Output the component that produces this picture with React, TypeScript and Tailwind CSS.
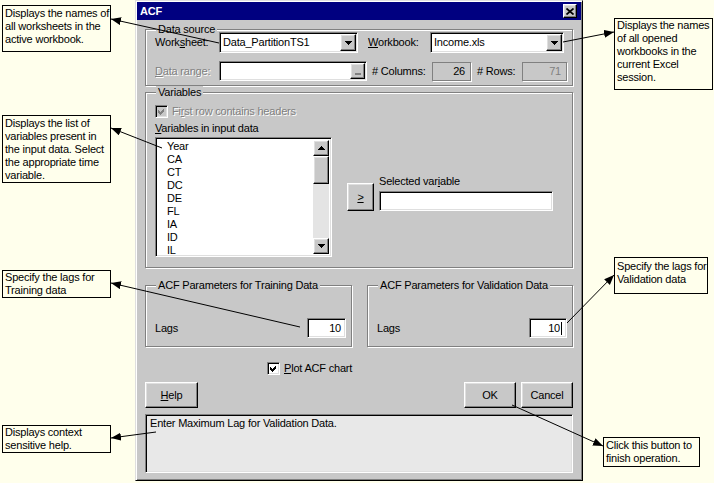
import React from 'react'

const sunken =
  'border border-t-[#808080] border-l-[#808080] border-b-white border-r-white shadow-[inset_1px_1px_0_#000,inset_-1px_-1px_0_#dfdfdf]'
const raised =
  'border border-t-white border-l-white border-b-black border-r-black shadow-[inset_-1px_-1px_0_#808080,inset_1px_1px_0_#dfdfdf]'
const etched = 'border border-[#808080] shadow-[inset_1px_1px_0_#fff,1px_1px_0_#fff]'
const disabled = 'text-[#808080] [text-shadow:1px_1px_0_#fff]'

function Callout({ className, lines }: { className: string; lines: string[] }) {
  return (
    <div className={`whitespace-nowrap border border-black bg-[#ffffec] pl-[2px] ${className}`}>
      {lines.map((l) => (
        <div key={l}>{l}</div>
      ))}
    </div>
  )
}

function DownArrow() {
  return (
    <svg width="7" height="4" shapeRendering="crispEdges">
      <path d="M0 0h7v1H0z M1 1h5v1H1z M2 2h3v1H2z M3 3h1v1H3z" fill="#000" />
    </svg>
  )
}

function UpArrow() {
  return (
    <svg width="7" height="4" shapeRendering="crispEdges">
      <path d="M3 0h1v1H3z M2 1h3v1H2z M1 2h5v1H1z M0 3h7v1H0z" fill="#000" />
    </svg>
  )
}

function Check({ color }: { color: string }) {
  return (
    <svg width="7" height="7" shapeRendering="crispEdges">
      <path d="M0 2 L2 4 L6 0 L6 3 L2 7 L0 5 Z" fill={color} />
    </svg>
  )
}

function Combo({ width, value }: { width: string; value: string }) {
  return (
    <div className={`flex h-[21px] items-center bg-white ${sunken} ${width}`}>
      <span className="flex-1 pl-[3px]">{value}</span>
      <div className={`mr-px flex h-[17px] w-[16px] items-center justify-center bg-[#c8c8c8] ${raised}`}>
        <DownArrow />
      </div>
    </div>
  )
}

function Legend({ text }: { text: string }) {
  return (
    <span className="absolute -top-[7px] left-[10px] bg-[#c8c8c8] px-[2px] whitespace-nowrap">{text}</span>
  )
}

const variables = ['Year', 'CA', 'CT', 'DC', 'DE', 'FL', 'IA', 'ID', 'IL']

function Dialog() {
  return (
    <div className="flex h-[481px] w-[448px] shrink-0 flex-col border border-t-[#dfdfdf] border-l-[#dfdfdf] border-b-black border-r-black bg-[#c8c8c8] p-px shadow-[inset_1px_1px_0_#fff,inset_-1px_-1px_0_#808080]">
      <div className="flex h-[18px] items-center justify-between bg-[#000080] pl-[3px] pr-[4px]">
        <span className="font-bold text-white">ACF</span>
        <div className={`flex h-[14px] w-[14px] items-center justify-center bg-[#c8c8c8] ${raised}`}>
          <svg width="8" height="7">
            <path d="M0.5 0.5 L7.5 6.5 M7.5 0.5 L0.5 6.5" stroke="#000" strokeWidth="1.7" />
          </svg>
        </div>
      </div>

      <div className="flex flex-col px-[8px]">
        {/* Data source */}
        <div className={`relative mt-[9px] h-[57px] pl-[9px] ${etched}`}>
          <Legend text="Data source" />
          <div className="mt-[2px] flex h-[21px] items-center">
            <span className="w-[64px]">
              Work<u>s</u>heet:
            </span>
            <Combo width="w-[139px]" value="Data_PartitionTS1" />
            <span className="ml-[10px] w-[62px]">
              <u>W</u>orkbook:
            </span>
            <Combo width="w-[134px]" value="Income.xls" />
          </div>
          <div className="mt-[8px] flex h-[20px] items-center">
            <span className={`w-[64px] ${disabled}`}>
              <u>D</u>ata range:
            </span>
            <div className={`flex h-[20px] w-[148px] items-center justify-end bg-white ${sunken}`}>
              <div className={`mr-px flex h-[16px] w-[15px] items-end justify-center bg-[#c8c8c8] pb-[3px] ${raised}`}>
                <div className="h-[2px] w-[6px] bg-[#808080]" />
              </div>
            </div>
            <span className="ml-[5px] w-[60px]"># Columns:</span>
            <div className="flex h-[19px] w-[39px] items-center justify-end border border-[#808080] pr-[5px] shadow-[1px_1px_0_#fff]">
              26
            </div>
            <span className="ml-[6px] w-[45px]"># Rows:</span>
            <div className="flex h-[19px] w-[45px] items-center justify-end border border-[#808080] pr-[5px] text-[#808080] shadow-[1px_1px_0_#fff]">
              71
            </div>
          </div>
        </div>

        {/* Variables */}
        <div className={`relative mt-[6px] h-[176px] pl-[9px] pt-[12px] ${etched}`}>
          <Legend text="Variables" />
          <div className="flex h-[13px] items-center">
            <div className={`flex h-[13px] w-[13px] items-center justify-center bg-[#c8c8c8] ${sunken}`}>
              <Check color="#808080" />
            </div>
            <span className={`ml-[4px] ${disabled}`}>
              Fi<u>r</u>st row contains headers
            </span>
          </div>
          <div className="mt-[4px] h-[13px]">
            <u>V</u>ariables in input data
          </div>
          <div className="mt-[2px] flex">
            <div className={`flex h-[120px] w-[177px] bg-white p-[2px] ${sunken}`}>
              <div className="flex-1 pl-[9px]">
                {variables.map((v) => (
                  <div key={v} className="h-[13px]">
                    {v}
                  </div>
                ))}
              </div>
              <div className="flex w-[16px] flex-col bg-[#e4e4e4]">
                <div className={`flex h-[16px] items-center justify-center bg-[#c8c8c8] ${raised}`}>
                  <UpArrow />
                </div>
                <div className={`h-[28px] bg-[#c8c8c8] ${raised}`} />
                <div className="flex-1" />
                <div className={`flex h-[16px] items-center justify-center bg-[#c8c8c8] ${raised}`}>
                  <DownArrow />
                </div>
              </div>
            </div>
            <div className={`ml-[15px] mt-[46px] flex h-[28px] w-[27px] items-center justify-center bg-[#c8c8c8] ${raised}`}>
              <u>&gt;</u>
            </div>
            <div className="ml-[5px] flex flex-col">
              <span className="mt-[38px] h-[13px]">
                Selected var<u>i</u>able
              </span>
              <div className={`mt-[3px] h-[20px] w-[174px] bg-white ${sunken}`} />
            </div>
          </div>
        </div>

        {/* ACF parameters */}
        <div className="mt-[17px] flex gap-[15px]">
          <div className={`relative h-[62px] w-[207px] ${etched}`}>
            <Legend text="ACF Parameters for Training Data" />
            <div className="flex items-center justify-between pl-[9px] pr-[5px] pt-[32px]">
              <span>
                La<u>g</u>s
              </span>
              <div className={`flex h-[20px] w-[39px] items-center justify-end bg-white pr-[4px] ${sunken}`}>10</div>
            </div>
          </div>
          <div className={`relative h-[62px] w-[206px] ${etched}`}>
            <Legend text="ACF Parameters for Validation Data" />
            <div className="flex items-center justify-between pl-[9px] pr-[5px] pt-[32px]">
              <span>Lags</span>
              <div className={`flex h-[20px] w-[38px] items-center justify-end bg-white pr-[4px] ${sunken}`}>
                10<span className="ml-px h-[13px] w-px bg-black" />
              </div>
            </div>
          </div>
        </div>

        <div className="ml-[122px] mt-[15px] flex h-[13px] items-center">
          <div className={`flex h-[13px] w-[13px] items-center justify-center bg-white ${sunken}`}>
            <Check color="#000" />
          </div>
          <span className="ml-[4px]">
            <u>P</u>lot ACF chart
          </span>
        </div>

        <div className="mt-[7px] flex h-[26px]">
          <div className={`flex w-[53px] items-center justify-center ${raised}`}>
            <span>
              <u>H</u>elp
            </span>
          </div>
          <div className={`ml-auto flex w-[52px] items-center justify-center ${raised}`}>OK</div>
          <div className={`ml-[5px] flex w-[52px] items-center justify-center ${raised}`}>Cancel</div>
        </div>

        <div className={`mt-[6px] h-[59px] bg-[#e8e8e8] pl-[4px] pt-[2px] ${sunken}`}>
          Enter Maximum Lag for Validation Data.
        </div>
      </div>
    </div>
  )
}

const arrows: [number, number, number, number][] = [
  [219, 43, 111, 19],
  [563, 42, 614, 32],
  [162, 148, 111, 128],
  [300, 327, 111, 283],
  [567, 323, 614, 275],
  [156, 432, 111, 438],
  [512, 405, 603, 446],
]

export default function App() {
  return (
    <div className="relative flex h-[483px] w-[714px] overflow-hidden bg-[#ffffec] font-['Liberation_Sans',Arial,sans-serif] text-[11px] leading-[13px] tracking-[-0.2px] text-black">
      <div className="flex w-[135px] shrink-0 flex-col pl-[2px]">
        <Callout
          className="mt-[5px] h-[47px] w-[109px] pt-px"
          lines={['Displays the names of', 'all worksheets in the', 'active workbook.']}
        />
        <Callout
          className="mt-[63px] h-[68px] w-[109px] pt-px"
          lines={['Displays the list of', 'variables present in', 'the input data. Select', 'the appropriate time', 'variable.']}
        />
        <Callout className="mt-[87px] h-[28px] w-[109px]" lines={['Specify the lags for', 'Training data']} />
        <Callout className="mt-[127px] h-[28px] w-[109px]" lines={['Displays context', 'sensitive help.']} />
      </div>

      <Dialog />

      <div className="flex flex-col">
        <Callout
          className="ml-[31px] mt-[18px] h-[72px] w-[99px]"
          lines={['Displays the names', 'of all opened', 'workbooks in the', 'current Excel', 'session.']}
        />
        <Callout
          className="ml-[31px] mt-[167px] h-[37px] w-[94px] pt-[2px]"
          lines={['Specify the lags for', 'Validation data']}
        />
        <Callout
          className="ml-[20px] mt-[143px] h-[30px] w-[97px] pt-px"
          lines={['Click this button to', 'finish operation.']}
        />
      </div>

      <svg className="pointer-events-none absolute left-0 top-0" width="714" height="483">
        <defs>
          <marker
            id="head"
            markerUnits="userSpaceOnUse"
            markerWidth="11"
            markerHeight="9"
            refX="10"
            refY="4"
            orient="auto"
          >
            <path d="M0 0 L10 4 L0 8 Z" fill="#000" />
          </marker>
        </defs>
        {arrows.map(([x1, y1, x2, y2], i) => (
          <line key={i} x1={x1} y1={y1} x2={x2} y2={y2} stroke="#000" strokeWidth="1" markerEnd="url(#head)" />
        ))}
      </svg>
    </div>
  )
}
